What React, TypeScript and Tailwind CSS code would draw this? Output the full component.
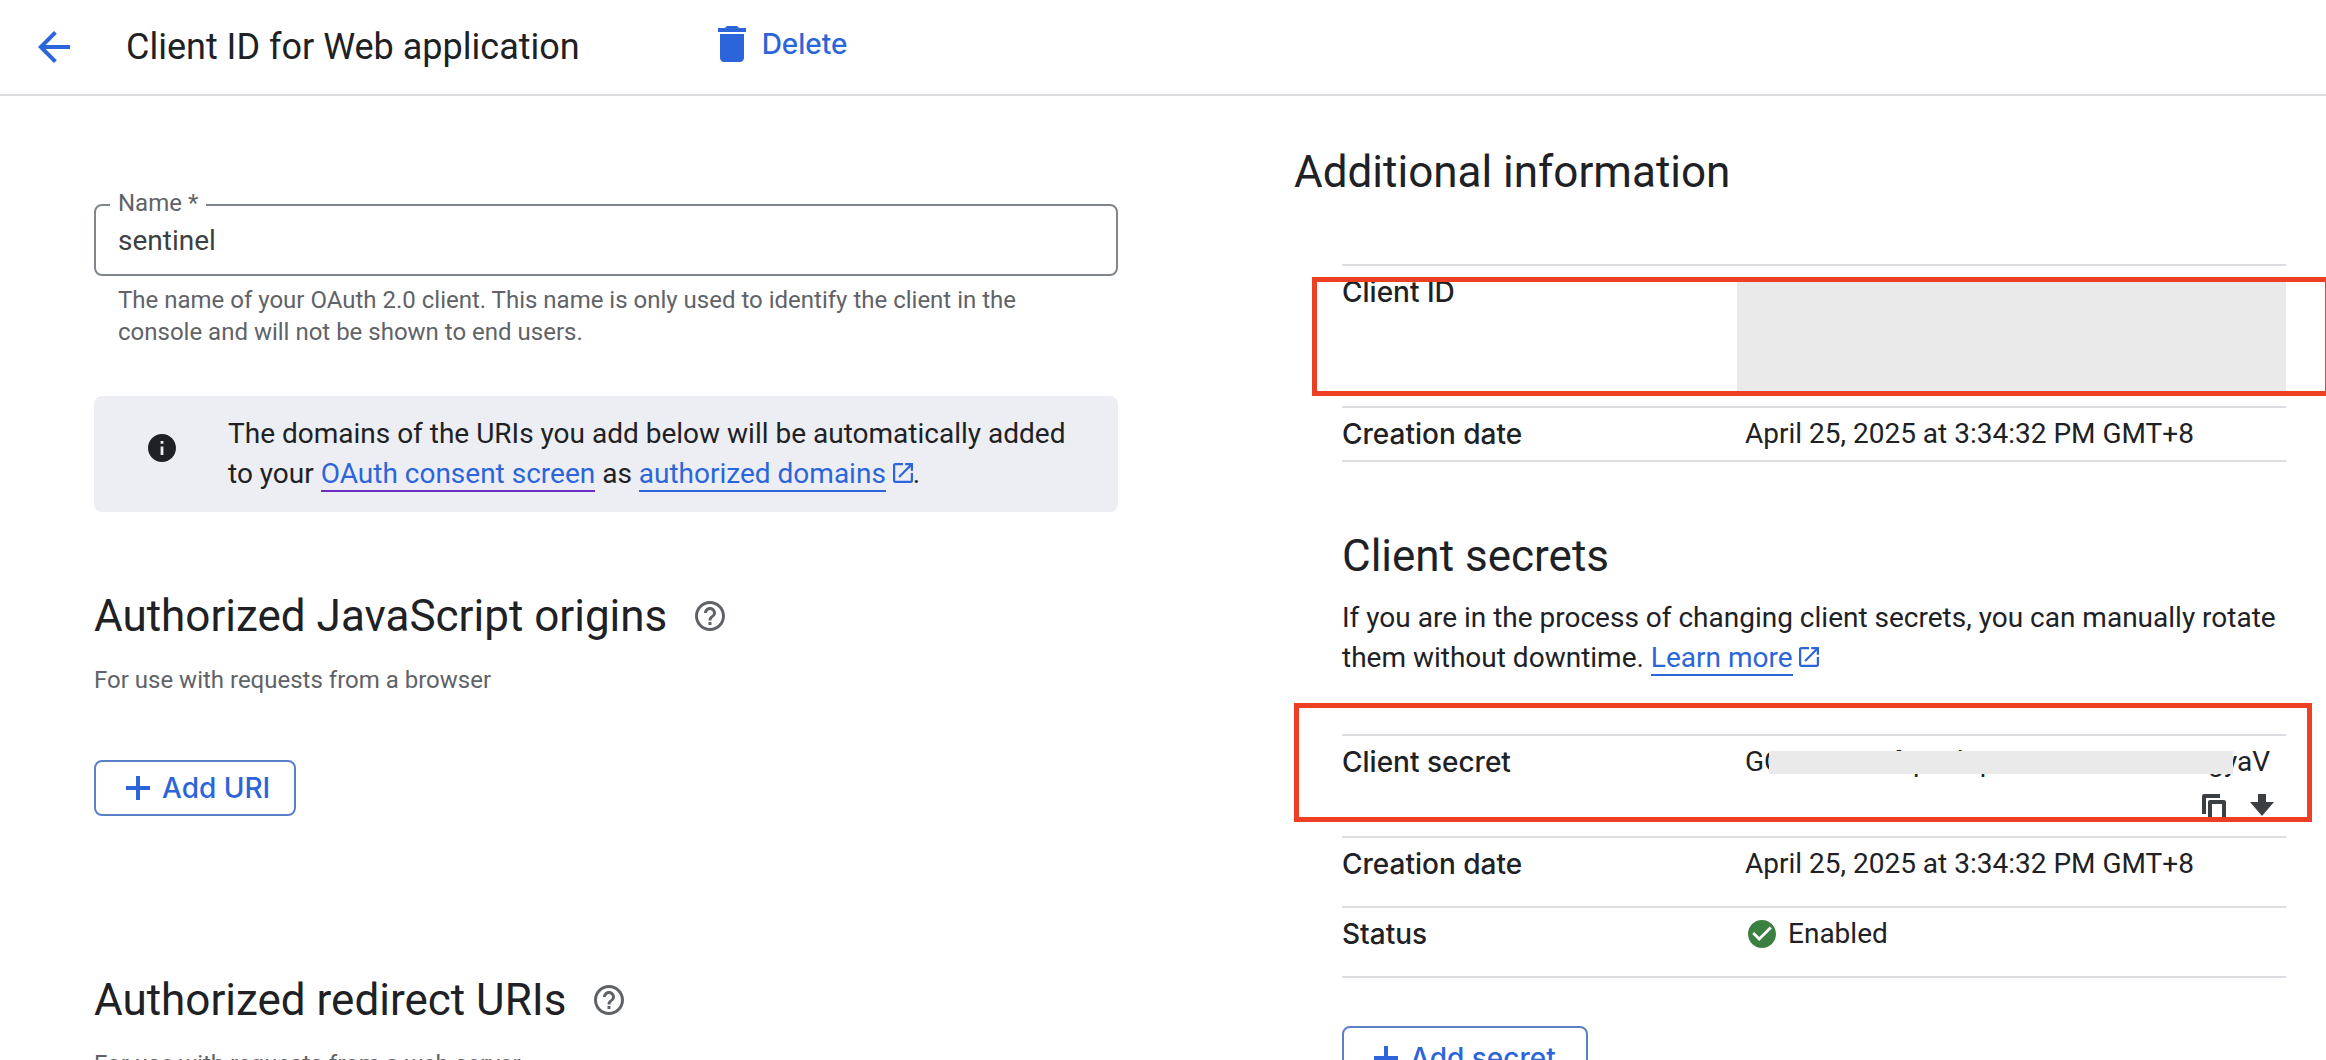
import type { ReactNode } from 'react';
import { MdArrowBack, MdCheckCircle, MdDelete, MdInfo } from 'react-icons/md';

function OpenInNewIcon() {
  return (
    <svg viewBox="3 3 18 18" className="inline size-5 align-baseline text-[#2c65d9]" fill="currentColor" aria-hidden="true">
      <path d="M19 19H5V5h7V3H5c-1.11 0-2 .9-2 2v14c0 1.1.89 2 2 2h14c1.1 0 2-.9 2-2v-7h-2v7zM14 3v2h3.59l-9.83 9.83 1.41 1.41L19 6.41V10h2V3h-7z" />
    </svg>
  );
}

function HelpIcon() {
  return (
    <svg viewBox="2 2 20 20" className="size-[30px]" fill="currentColor" aria-hidden="true">
      <path d="M11 18h2v-2h-2v2zm1-16C6.48 2 2 6.48 2 12s4.48 10 10 10 10-4.48 10-10S17.52 2 12 2zm0 18c-4.41 0-8-3.59-8-8s3.59-8 8-8 8 3.59 8 8-3.59 8-8 8zm0-14c-2.21 0-4 1.79-4 4h2c0-1.1.9-2 2-2s2 .9 2 2c0 2-3 1.75-3 5h2c0-2.25 3-2.5 3-5 0-2.21-1.79-4-4-4z" />
    </svg>
  );
}

function PlusIcon() {
  return (
    <svg viewBox="0 0 24 24" className="size-6" fill="currentColor" aria-hidden="true">
      <path d="M10 0h4v10h10v4H14v10h-4V14H0v-4h10z" />
    </svg>
  );
}

function CopyIcon() {
  return (
    <svg viewBox="0 0 24 28" className="h-7 w-6" fill="currentColor" aria-hidden="true">
      <path d="M18 0v4H4v16H0V2Q0 0 2 0z" />
      <path fillRule="evenodd" d="M8 6h14q2 0 2 2v18q0 2-2 2H8q-2 0-2-2V8q0-2 2-2zm2 4v14h10V10z" />
    </svg>
  );
}

function DownloadIcon() {
  return (
    <svg viewBox="0 0 24 28" className="h-7 w-6" fill="currentColor" aria-hidden="true">
      <path d="M8 0h8v8h8L12 22 0 8h8z" />
    </svg>
  );
}

function TextLink({ children, visited = false }: { children: ReactNode; visited?: boolean }) {
  return (
    <a
      href="#"
      className={`text-[#2c65d9] border-b-2 ${visited ? 'border-[#6a2fc0]' : 'border-[#2c65d9]'}`}
    >
      {children}
    </a>
  );
}

function SectionHeading({ children }: { children: ReactNode }) {
  return (
    <div className="flex items-center gap-7">
      <h2 className="text-[44px] leading-[56px]">{children}</h2>
      <button type="button" aria-label="Help" className="text-[#5f6368]">
        <HelpIcon />
      </button>
    </div>
  );
}

function OutlineButton({ children, className }: { children: ReactNode; className: string }) {
  return (
    <button
      type="button"
      className={`flex items-center gap-3 rounded-lg border-2 border-[#5c80c8] font-[Inter,sans-serif] text-[28px] leading-[36px] font-medium text-[#2c65d9] ${className}`}
    >
      <PlusIcon />
      {children}
    </button>
  );
}

function Row({ label, children, className = '' }: { label: string; children: ReactNode; className?: string }) {
  return (
    <div className={`grid grid-cols-[403fr_541fr] border-t-2 border-[#dcdce1] pt-1.5 ${className}`}>
      <dt className="font-[Inter,sans-serif] font-medium">{label}</dt>
      <dd>{children}</dd>
    </div>
  );
}

export default function App() {
  return (
    <div className="h-screen overflow-hidden bg-white font-[Roboto,sans-serif] text-[28px] leading-10 text-[#202124]">
      <header className="flex h-24 items-center border-b-2 border-[#dcdce1] pl-[30px]">
        <button type="button" aria-label="Back" className="text-[#2c65d9]">
          <MdArrowBack className="size-12" />
        </button>
        <h1 className="ml-12 text-[36px] leading-[48px]">Client ID for Web application</h1>
        <button
          type="button"
          className="mb-1.5 ml-32 flex items-center gap-1.5 font-[Inter,sans-serif] font-medium text-[#2c65d9]"
        >
          <MdDelete className="size-12" />
          Delete
        </button>
      </header>

      <main className="grid grid-cols-[1024fr_992fr] gap-x-44 pr-10 pl-[94px]">
        <section className="pt-[108px]">
          <div className="relative">
            <label
              htmlFor="client-name"
              className="absolute -top-[15px] left-4 bg-white px-2 text-[24px] leading-7 text-[#5f6368]"
            >
              Name *
            </label>
            <input
              id="client-name"
              defaultValue="sentinel"
              className="block h-[72px] w-full rounded-lg border-2 border-[#80868b] px-[22px] text-[#3c4043] outline-none"
            />
          </div>
          <p className="mt-2 px-6 text-[24px] leading-8 text-[#5f6368]">
            The name of your OAuth 2.0 client. This name is only used to identify the client in the console and will
            not be shown to end users.
          </p>

          <div className="mt-12 flex items-start rounded-lg bg-[#edeef3] py-[18px] pr-12 pl-[54px]">
            <svg viewBox="2 2 20 20" className="mt-5 size-7 shrink-0" aria-hidden="true">
              <MdInfo size={24} />
            </svg>
            <p className="ml-[52px]">
              The domains of the URIs you add below will be automatically added to your{' '}
              <TextLink visited>OAuth consent screen</TextLink> as <TextLink>authorized domains</TextLink>{' '}
              <OpenInNewIcon />.
            </p>
          </div>

          <div className="mt-[76px]">
            <SectionHeading>Authorized JavaScript origins</SectionHeading>
            <p className="mt-5 text-[24px] leading-8 text-[#5f6368]">For use with requests from a browser</p>
            <OutlineButton className="mt-[64px] py-2 pr-6 pl-[30px]">Add URI</OutlineButton>
          </div>

          <div className="mt-[156px]">
            <SectionHeading>Authorized redirect URIs</SectionHeading>
            <p className="mt-5 text-[24px] leading-8 text-[#5f6368]">For use with requests from a web server</p>
          </div>
        </section>

        <section className="pt-12">
          <h2 className="text-[44px] leading-[56px]">Additional information</h2>

          <div className="mt-16 ml-12">
            <dl className="relative border-b-2 border-[#dcdce1]">
              <Row label="Client ID" className="h-[142px]">
                <div className="mt-2.5 -ml-2 h-[112px] bg-[#eaeaea]" />
              </Row>
              <Row label="Creation date" className="pb-1.5">
                April 25, 2025 at 3:34:32 PM GMT+8
              </Row>
              <div className="pointer-events-none absolute top-[13px] -right-11 -left-[30px] h-[119px] border-[5px] border-[#ed3f24]" />
            </dl>

            <h2 className="mt-[66px] text-[44px] leading-[56px]">Client secrets</h2>
            <p className="mt-[14px]">
              If you are in the process of changing client secrets, you can manually rotate them without downtime.{' '}
              <TextLink>Learn more</TextLink>
              <span className="pl-1.5">
                <OpenInNewIcon />
              </span>
            </p>

            <dl className="relative mt-[56px] border-b-2 border-[#dcdce1]">
              <Row label="Client secret" className="h-[102px]">
                <div className="relative flex pr-4">
                  <span>GO</span>
                  <span className="ml-[108px]">f</span>
                  <span className="ml-3">p</span>
                  <span className="ml-7">l</span>
                  <span className="ml-4">p</span>
                  <span className="ml-auto">gyaV</span>
                  <span className="absolute top-[9px] right-[53px] left-6 h-[23px] bg-[#eaeaea]" />
                </div>
                <div className="mt-3 flex justify-end gap-6 pr-3 text-[#3c4043]">
                  <button type="button" aria-label="Copy client secret">
                    <CopyIcon />
                  </button>
                  <button type="button" aria-label="Download client secret">
                    <DownloadIcon />
                  </button>
                </div>
              </Row>
              <Row label="Creation date" className="pb-[22px]">
                April 25, 2025 at 3:34:32 PM GMT+8
              </Row>
              <Row label="Status" className="pb-[22px]">
                <span className="flex items-center gap-3 pl-[3px]">
                  <svg viewBox="2 2 20 20" className="size-7 text-[#3c8041]" aria-hidden="true">
                    <MdCheckCircle size={24} />
                  </svg>
                  Enabled
                </span>
              </Row>
              <div className="pointer-events-none absolute -top-[31px] -right-[26px] -left-12 h-[119px] border-[5px] border-[#ed3f24] shadow-[0_9px_0_#fff]" />
            </dl>

            <OutlineButton className="mt-12 px-[30px] py-3">Add secret</OutlineButton>
          </div>
        </section>
      </main>
    </div>
  );
}
